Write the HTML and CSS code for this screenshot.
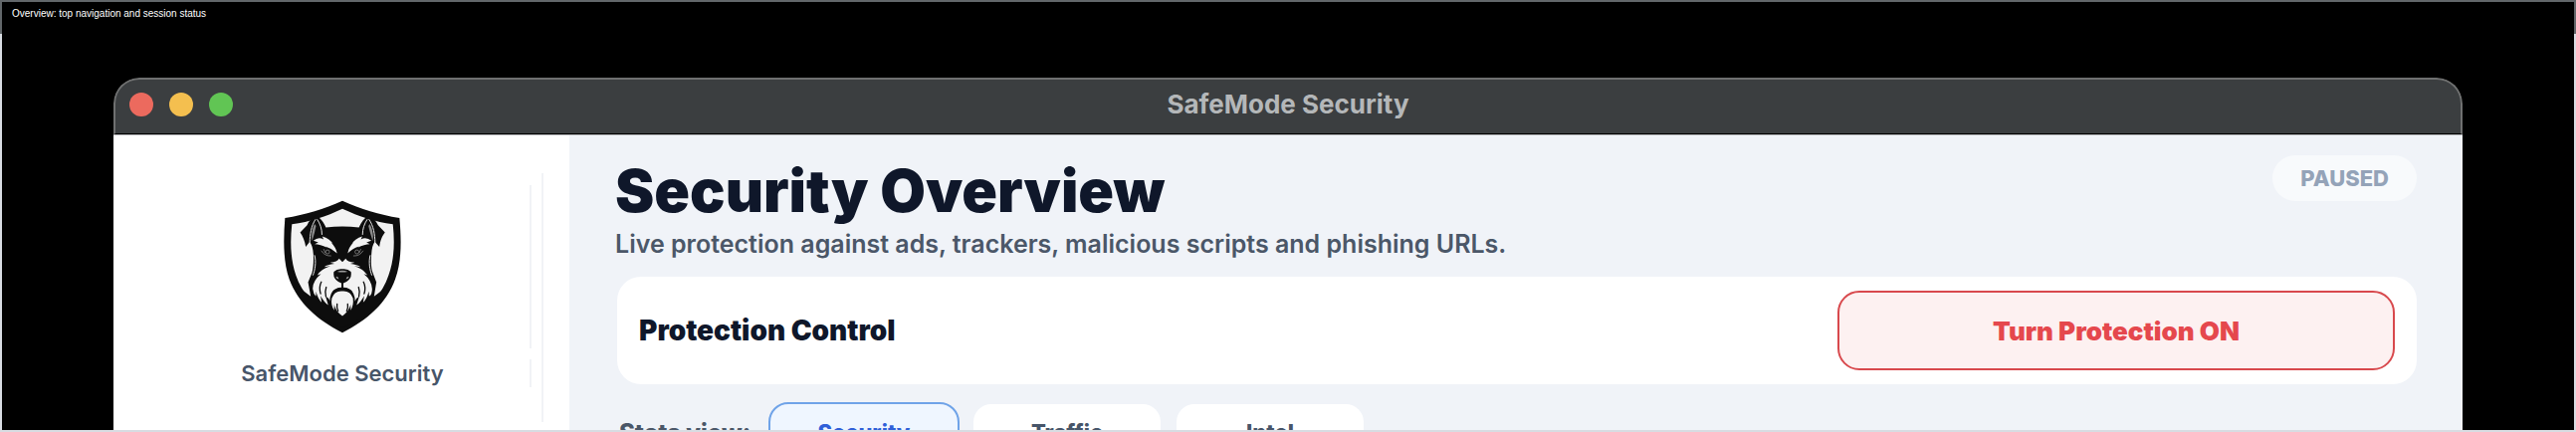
FILE: index.html
```html
<!DOCTYPE html>
<html lang="en">
<head>
<meta charset="utf-8">
<title>SafeMode Security</title>
<link rel="stylesheet" href="styles.css">
</head>
<body>
<figure class="frame">
  <div class="screen">
  <figcaption class="caption">Overview: top navigation and session status</figcaption>
  <div class="window">
    <header class="titlebar">
      <div class="lights">
        <button class="light close" aria-label="Close"></button>
        <button class="light minimize" aria-label="Minimize"></button>
        <button class="light expand" aria-label="Zoom"></button>
      </div>
      <span class="window-title">SafeMode Security</span>
    </header>
    <div class="content">
      <aside class="sidebar">
        <div class="brand">
          <div class="brand-logo">
            <svg class="logo" viewBox="73 60 362 404" role="img" aria-label="SafeMode Security logo">
              <path fill="#0d0d0d" d="M254 62 C310 88 365 104 427 114 C433 180 434 245 414 300 C388 372 330 424 254 462 C178 424 120 372 93 300 C74 245 75 180 80 114 C143 104 198 88 254 62Z"/>
              <path fill="#f2f2f2" d="M254 86 C306 110 352 125 407 133 C413 190 411 240 394 288 C385 316 370 340 352 362 L156 362 C138 340 122 316 113 288 C97 240 95 190 101 133 C156 125 204 110 254 86Z"/>
              <path fill="#0d0d0d" d="M174 107 C188 114 197 128 204 143 Q254 136 304 143 C311 127 321 114 334 107 C348 113 357 126 362 136 L383 158 C374 170 369 182 366 202 L352 186 C346 195 343 207 342 224 C340 250 341 267 346 280 L357 309 L350 352 L384 326 C356 386 310 426 254 447 C198 426 152 386 124 326 L158 352 L150 309 L162 280 C166 263 167 245 166 224 C165 207 161 195 155 186 L143 202 C140 184 134 170 126 158 L147 136 C152 125 161 113 174 107Z"/>
              <path fill="none" stroke="#e8e8e8" stroke-width="3" stroke-linecap="round" d="M172 119 C159 139 156 163 155 187 M178 119 C187 132 192 148 192 164 M335 119 C349 139 352 163 353 187 M329 119 C320 132 315 148 315 164 M170 228 C175 248 171 272 165 287 M338 228 C333 248 337 272 343 287"/>
              <path fill="#8b8b8b" d="M170 132 Q158 155 162 184 Q170 160 174 138Z M337 132 Q350 155 346 184 Q338 160 333 138Z"/>
              <path fill="#f2f2f2" d="M166 183 Q181 170 197 179 L193 170 Q216 177 225 192 L220 189 Q234 203 238 221 Q220 205 202 200 L207 204 Q187 193 170 193 L181 188Z M342 183 Q326 170 310 179 L314 170 Q292 177 283 192 L287 189 Q273 203 270 221 Q287 205 305 200 L300 204 Q321 193 337 193 L327 188Z"/>
              <g fill="none" stroke="#a0a0a0" stroke-width="2">
                <path d="M190 213 Q200 230 220 229 M197 208 L202 220 M317 213 Q307 230 287 229 M310 208 L305 220"/>
                <circle cx="209" cy="217" r="6"/><circle cx="298" cy="217" r="6"/>
              </g>
              <path fill="#f2f2f2" d="M244 237 Q239 247 217 249 L230 253 Q208 255 199 263 L218 260 Q189 269 178 288 L189 284 Q164 305 164 328 Q166 344 174 352 L174 337 Q180 361 191 370 L188 350 Q199 370 211 378 L203 352 Q215 358 216 367 Q215 341 231 331 Q243 322 254 325 Q265 322 277 331 Q292 341 292 367 Q294 358 305 352 L297 378 Q309 370 320 350 L317 370 Q328 361 334 337 L335 352 Q345 344 344 328 Q342 303 319 284 L330 288 Q315 267 290 260 L309 263 Q299 255 278 253 L291 249 Q268 247 264 237 L254 248Z"/>
              <path fill="#0d0d0d" d="M228 277 Q238 267 254 269 Q270 267 280 277 Q283 292 273 302 Q265 310 257 312 L257 325 Q276 328 285 337 Q268 331 254 336 Q240 331 223 337 Q232 328 251 325 L251 312 Q243 310 235 302 Q225 292 228 277Z"/>
              <path fill="#999" d="M238 277 Q254 270 270 277 Q254 280 238 277Z M234 292 Q242 290 243 300 Q236 299 234 292Z M274 292 Q266 290 265 300 Q272 299 274 292Z"/>
              <path fill="none" stroke="#0d0d0d" stroke-width="4" stroke-linecap="round" d="M190 308 Q182 324 188 344 M205 324 Q200 338 204 352 M318 308 Q326 324 320 344 M303 324 Q308 338 304 352"/>
              <path fill="#f2f2f2" d="M254 336 Q278 334 286 357 Q289 377 279 394 L279 377 Q273 399 254 411 Q234 399 229 377 L229 394 Q218 377 222 357 Q230 334 254 336Z"/>
              <path fill="none" stroke="#0d0d0d" stroke-width="4" stroke-linecap="round" d="M238 375 Q236 384 241 396 M270 375 Q272 384 267 396"/>
            </svg>
          </div>
          <div class="brand-name">SafeMode Security</div>
        </div>
      </aside>
      <main class="main">
        <div class="page-head">
          <div>
            <h1 class="title">Security Overview</h1>
            <p class="subtitle">Live protection against ads, trackers, malicious scripts and phishing URLs.</p>
          </div>
          <span class="status">PAUSED</span>
        </div>
        <section class="control">
          <h2 class="control-title">Protection Control</h2>
          <button class="toggle">Turn Protection ON</button>
        </section>
        <div class="stats">
          <span class="stats-label">Stats view:</span>
          <button class="tab active">Security</button>
          <button class="tab">Traffic</button>
          <button class="tab">Intel</button>
        </div>
      </main>
    </div>
  </div>
  </div>
</figure>
</body>
</html>
```
FILE: styles.css
```css
* { box-sizing: border-box; }
body {
  margin: 0;
  background: #000;
  font-family: Inter, "Liberation Sans", sans-serif;
}
h1, h2, p, figure { margin: 0; }
button { font: inherit; padding: 0; border: 0; }
.frame {
  height: 100vh;
  padding: 2px;
  background: linear-gradient(#62676a 34px, #d8dce2 34px);
}
.screen {
  display: flex;
  flex-direction: column;
  height: 100%;
  overflow: hidden;
  background: #000;
}
.caption {
  padding: 6px 10px;
  height: 76px;
  flex: none;
  color: #fff;
  font: 10px/12px "Liberation Sans", sans-serif;
}
.window {
  flex: none;
  margin: 0 112px;
  border-radius: 26px 26px 0 0;
  overflow: hidden;
}
.titlebar {
  display: grid;
  grid-template-columns: 1fr auto 1fr;
  align-items: center;
  height: 57px;
  padding: 0 14px 4px;
  background: #3b3e40;
  border: 2px solid #6f7070;
  border-bottom: 1px solid #000;
  border-radius: 26px 26px 0 0;
}
.lights { display: flex; gap: 16px; }
.light { width: 24px; height: 24px; border-radius: 50%; }
.close { background: #ec6a5e; }
.minimize { background: #f4bf4f; }
.expand { background: #61c554; }
.window-title { color: #b4b7b9; font-size: 26px; font-weight: 700; line-height: 32px; }
.content { display: flex; height: 340px; border-top: 1px solid #b5b7ba; }
.sidebar { width: 458px; flex: none; padding: 38px 26px; background: #fff; }
.brand {
  display: flex;
  flex-direction: column;
  gap: 11px;
  height: 250px;
  padding: 12px 10px 12px 16px;
  border-right: 2px solid #f1f3f6;
}
.brand-logo {
  display: flex;
  justify-content: center;
  align-items: center;
  height: 164px;
  border-right: 2px solid #f1f3f6;
}
.logo { width: 120px; height: 134px; }
.brand-name {
  border-right: 2px solid #f1f3f6;
  color: #475569;
  font-size: 22px;
  font-weight: 600;
  line-height: 28px;
  text-align: center;
}
.main { flex: 1; padding: 20px 46px; background: #f0f3f8; }
.page-head { display: flex; justify-content: space-between; align-items: flex-start; }
.title { color: #0f172a; font-size: 59px; font-weight: 900; line-height: 72px; }
.subtitle { color: #4b5768; font-size: 25px; font-weight: 600; line-height: 34px; }
.status {
  padding: 0 28px;
  border-radius: 23px;
  background: #f8fafc;
  color: #94a3b8;
  font-size: 22px;
  font-weight: 800;
  line-height: 46px;
}
.control {
  display: flex;
  justify-content: space-between;
  align-items: center;
  margin: 16px 0 18px 2px;
  padding: 14px 22px;
  border-radius: 24px;
  background: #fff;
}
.control-title { color: #0f172a; font-size: 28px; font-weight: 900; line-height: 34px; }
.toggle {
  width: 560px;
  height: 80px;
  border: 2px solid #d8494d;
  border-radius: 22px;
  background: #fdf1f1;
  color: #e5484d;
  font-size: 26px;
  font-weight: 900;
}
.stats { display: flex; align-items: center; gap: 12px; margin-left: 4px; }
.stats-label { width: 138px; color: #4b5768; font-size: 24px; font-weight: 800; }
.tab {
  width: 192px;
  height: 60px;
  border: 2px solid transparent;
  border-radius: 20px;
  background: #fff;
  background-clip: padding-box;
  color: #475569;
  font-size: 22px;
  font-weight: 800;
}
.active { border-color: #6fa3e8; background: #eff6ff; color: #2f5fd8; }
```
